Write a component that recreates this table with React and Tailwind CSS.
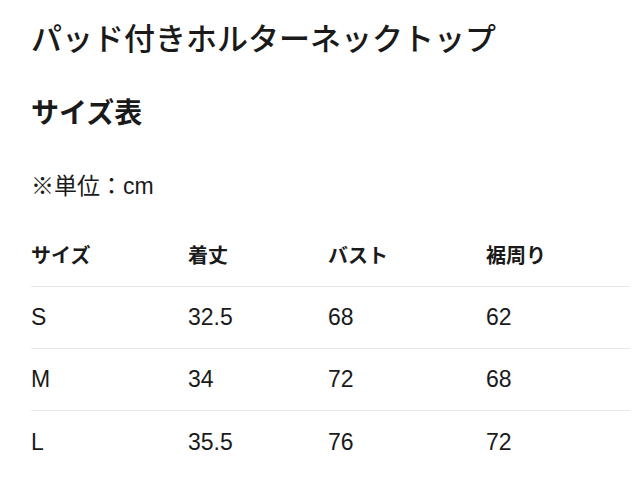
import React from 'react';

const font = { fontFamily: '"Liberation Sans", "Noto Sans CJK JP", sans-serif' };

const rows = [
  ['S', '32.5', '68', '62'],
  ['M', '34', '72', '68'],
  ['L', '35.5', '76', '72'],
];

const App = () => {
  return (
    <div className="min-h-[502px] bg-white text-[#1a1a1a] pl-[31px] pr-[10px] pt-[20px]" style={font}>
      <h1 className="text-[31px] leading-[40px] font-medium">パッド付きホルターネックトップ</h1>

      <h2 className="mt-[34px] text-[28px] leading-[40px] font-bold">サイズ表</h2>

      <p className="mt-[36px] text-[23px] leading-[32px]">※単位：cm</p>

      {/* Size table */}
      <div className="mt-[24px]">
        <div className="grid grid-cols-[157px_140px_158px_1fr] h-[61px] items-center border-b border-[#e8e8e8] text-[20px] font-bold">
          <div>サイズ</div>
          <div>着丈</div>
          <div>バスト</div>
          <div>裾周り</div>
        </div>
        {rows.map((r, i) => (
          <div
            key={r[0]}
            className={
              'grid grid-cols-[157px_140px_158px_1fr] h-[62px] items-center text-[23px] ' +
              (i < rows.length - 1 ? 'border-b border-[#e8e8e8]' : '')
            }
          >
            {r.map((c, j) => (
              <div key={j}>{c}</div>
            ))}
          </div>
        ))}
      </div>
    </div>
  );
};

export default App;
